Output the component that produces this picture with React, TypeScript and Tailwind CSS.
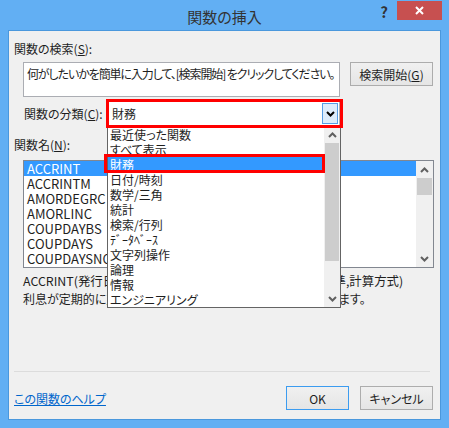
import React from "react";

const categories = [
  "最近使った関数",
  "すべて表示",
  "財務",
  "日付/時刻",
  "数学/三角",
  "統計",
  "検索/行列",
  "ﾃﾞｰﾀﾍﾞｰｽ",
  "文字列操作",
  "論理",
  "情報",
  "エンジニアリング",
];

const functions = ["ACCRINT", "ACCRINTM", "AMORDEGRC", "AMORLINC", "COUPDAYBS", "COUPDAYS", "COUPDAYSNC"];

function Chevron({ dir, className }: { dir: "up" | "down"; className?: string }) {
  return (
    <svg width="9" height="6" viewBox="0 0 9 6" className={className}>
      <polyline
        points={dir === "up" ? "1,5 4.5,1.5 8,5" : "1,1 4.5,4.5 8,1"}
        fill="none"
        stroke="currentColor"
        strokeWidth="2"
      />
    </svg>
  );
}

export default function App() {
  return (
    <div className="flex h-[428px] w-[449px] flex-col bg-[#62aff3] font-['Noto_Sans_CJK_JP','Noto_Sans',sans-serif] text-[12px] leading-[15px] text-[#1e1e1e] [font-feature-settings:'palt']">
      <header className="relative flex h-[30px] shrink-0 items-center justify-center">
        <h1 className="pt-[3px] text-[15px] text-[#333]">関数の挿入</h1>
        <span className="absolute right-[61px] top-[3px] text-[15px] font-bold leading-[18px] text-[#333]">?</span>
        <button className="absolute right-[7px] top-[1px] flex h-[19px] w-[45px] items-center justify-center bg-[#c75050]">
          <svg width="9" height="9" viewBox="0 0 9 9">
            <path d="M1 1 L8 8 M8 1 L1 8" stroke="#fff" strokeWidth="2" />
          </svg>
        </button>
      </header>

      <main className="relative mx-[8px] mb-[8px] flex flex-1 flex-col border border-[#4a98dd] bg-[#f0f0f0] px-[5px] pb-[9px] pt-[10px]">
        <p className="h-[15px]">
          関数の検索(<span className="underline">S</span>):
        </p>

        <div className="mt-[6px] flex gap-[10px] pl-[9px]">
          <div className="h-[35px] w-[317px] whitespace-nowrap border border-[#abadb3] bg-white px-[3px] pt-[3px] tracking-[-1.1px]">
            何がしたいかを簡単に入力して、[検索開始] をクリックしてください。
          </div>
          <button className="h-[24px] w-[83px] border border-[#acacac] bg-gradient-to-b from-[#f0f0f0] to-[#e5e5e5]">
            検索開始(<span className="underline">G</span>)
          </button>
        </div>

        <div className="mt-[4px] flex h-[25px] items-center">
          <span className="ml-[10px] w-[83px]">
            関数の分類(<span className="underline">C</span>):
          </span>
          <div className="flex h-[25px] w-[233px] items-stretch border border-[#abadb3] bg-white">
            <span className="flex flex-1 items-center pl-[4px]">財務</span>
            <span className="m-[1px] flex w-[16px] items-center justify-center border border-[#569de5] bg-[#dcecfc] text-black">
              <Chevron dir="down" />
            </span>
          </div>
        </div>

        <p className="mt-[11px] h-[15px]">
          関数名(<span className="underline">N</span>):
        </p>

        <div className="ml-[9px] mt-[8px] flex h-[108px] w-[411px] border border-[#828790] bg-white">
          <ul className="flex-1 text-[13px]">
            {functions.map((f, i) => (
              <li key={f} className={`h-[15px] pl-[3px] ${i === 0 ? "bg-[#3399ff] text-white" : ""}`}>
                {f}
              </li>
            ))}
          </ul>
          <div className="flex w-[17px] flex-col bg-[#f0f0f0] text-[#606060]">
            <span className="flex h-[17px] items-center justify-center">
              <Chevron dir="up" />
            </span>
            <span className="mx-[1px] h-[17px] bg-[#cdcdcd]" />
            <span className="flex-1" />
            <span className="flex h-[17px] items-center justify-center">
              <Chevron dir="down" />
            </span>
          </div>
        </div>

        <div className="mt-[4px] pl-[9px] leading-[18px]">
          <p className="whitespace-nowrap text-[12.4px]">ACCRINT(発行日,最初の利払日,受渡日,利率,額面,頻度,基準,計算方式)</p>
          <p className="whitespace-nowrap">利息が定期的に支払われる有価証券に対する未収利息を返します。</p>
        </div>

        <div className="mt-auto mr-[5px] border-t border-[#dcdcdc]" />
        <div className="mt-[14px] flex h-[24px] items-center">
          <a className="text-[#0066cc] underline">この関数のヘルプ</a>
          <div className="ml-auto mr-[2px] flex gap-[11px]">
            <button className="h-[24px] w-[63px] border border-[#3c9cf0] bg-gradient-to-b from-[#f0f0f0] to-[#e5e5e5]">
              OK
            </button>
            <button className="h-[24px] w-[73px] border border-[#adadad] bg-gradient-to-b from-[#f0f0f0] to-[#e5e5e5]">
              キャンセル
            </button>
          </div>
        </div>

        {/* open category dropdown */}
        <div className="absolute left-[98px] top-[95px] flex h-[182px] w-[234px] border border-[#646464] bg-white">
          <ul className="flex-1">
            {categories.map((c, i) => (
              <li
                key={c}
                className={`h-[15px] whitespace-nowrap pl-[2px] ${i === 2 ? "bg-[#3399ff] text-white" : ""}`}
              >
                {c}
              </li>
            ))}
          </ul>
          <div className="flex w-[16px] flex-col bg-[#f0f0f0] text-[#606060]">
            <span className="flex h-[16px] items-center justify-center">
              <Chevron dir="up" />
            </span>
            <span className="mx-[1px] h-[118px] bg-[#cdcdcd]" />
            <span className="flex-1" />
            <span className="flex h-[16px] items-center justify-center">
              <Chevron dir="down" />
            </span>
          </div>
        </div>

        {/* red highlight boxes */}
        <div className="absolute left-[97px] top-[68px] h-[29px] w-[237px] border-[3px] border-[#ff0000]" />
        <div className="absolute left-[95px] top-[123px] h-[19px] w-[221px] border-[3px] border-[#ff0000]" />
      </main>
    </div>
  );
}
